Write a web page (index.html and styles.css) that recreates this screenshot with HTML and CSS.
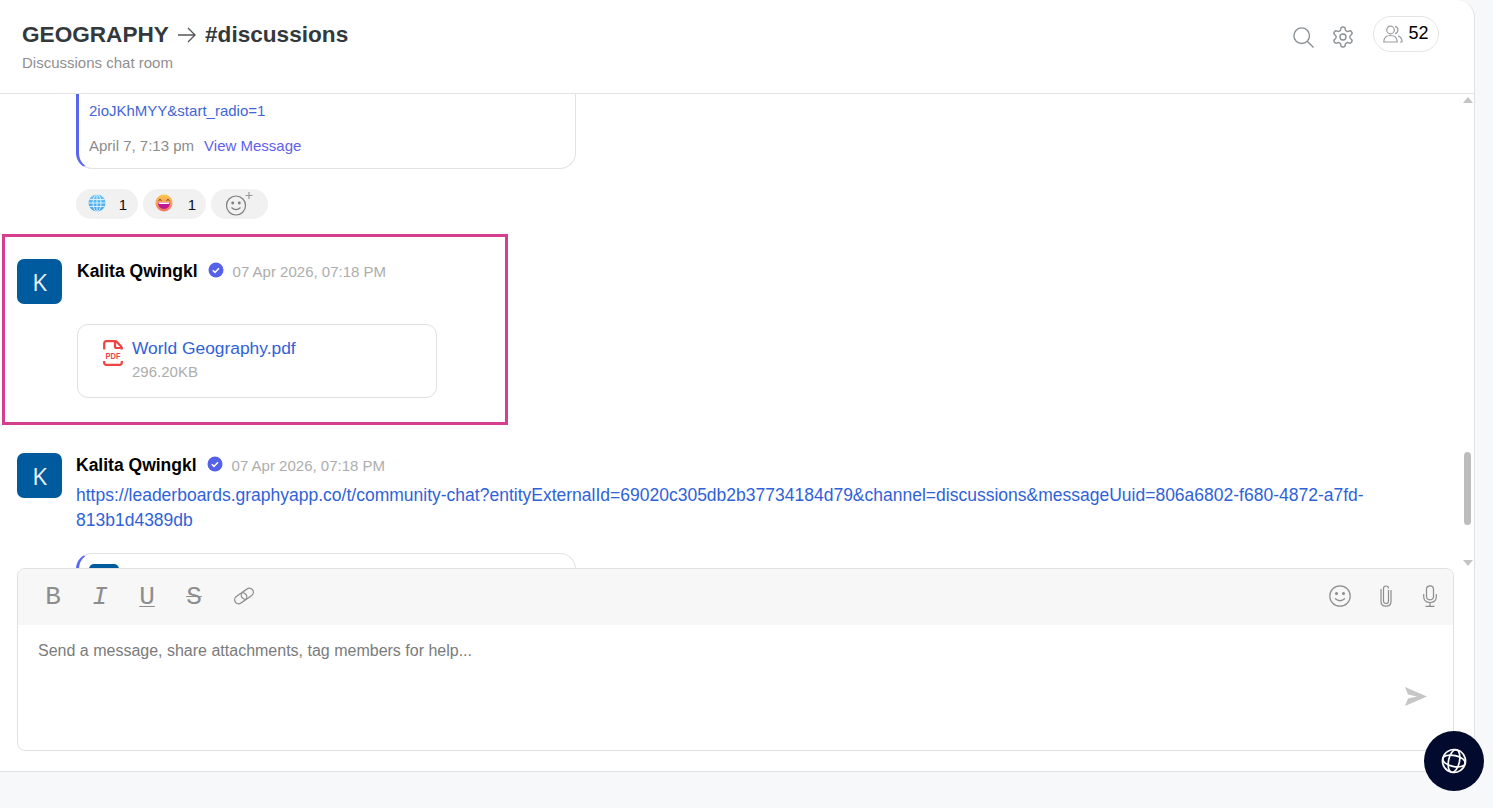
FILE: index.html
```html
<!DOCTYPE html>
<html lang="en">
<head>
<meta charset="utf-8">
<title>GEOGRAPHY → #discussions</title>
<link rel="stylesheet" href="styles.css">
</head>
<body>
<main class="panel">
  <header class="head">
    <div class="head-text">
      <h1 class="title">GEOGRAPHY
        <svg class="title-arrow" width="20" height="18" viewBox="0 0 20 18"><path d="M1 9h17M11 2l7 7-7 7" fill="none" stroke="#555" stroke-width="1.3"/></svg>
        #discussions</h1>
      <p class="subtitle">Discussions chat room</p>
    </div>
    <div class="head-actions">
      <svg class="head-icon head-search" width="21" height="21" viewBox="0 0 21 21"><circle cx="8.700" cy="8.700" r="7.800" fill="none" stroke="#8b9094" stroke-width="1.400"/><path d="M14.500 14.500l6 6" stroke="#8b9094" stroke-width="1.400"/></svg>
      <svg class="head-icon" width="24" height="24" viewBox="0 0 24 24" fill="none" stroke="#8b9094" stroke-width="1.400" stroke-linejoin="round"><circle cx="12" cy="12" r="3"/><path d="M12.220 2h-.44a2 2 0 0 0-2 2v.18a2 2 0 0 1-1 1.730l-.43.25a2 2 0 0 1-2 0l-.15-.08a2 2 0 0 0-2.730.73l-.22.38a2 2 0 0 0 .73 2.730l.15.1a2 2 0 0 1 1 1.720v.51a2 2 0 0 1-1 1.740l-.15.09a2 2 0 0 0-.73 2.730l.22.38a2 2 0 0 0 2.730.73l.15-.08a2 2 0 0 1 2 0l.43.25a2 2 0 0 1 1 1.730V20a2 2 0 0 0 2 2h.44a2 2 0 0 0 2-2v-.18a2 2 0 0 1 1-1.730l.43-.25a2 2 0 0 1 2 0l.15.08a2 2 0 0 0 2.730-.73l.22-.39a2 2 0 0 0-.73-2.730l-.15-.08a2 2 0 0 1-1-1.740v-.5a2 2 0 0 1 1-1.740l.15-.09a2 2 0 0 0 .73-2.730l-.22-.38a2 2 0 0 0-2.730-.73l-.15.08a2 2 0 0 1-2 0l-.43-.25a2 2 0 0 1-1-1.730V4a2 2 0 0 0-2-2z"/></svg>
      <div class="members">
        <svg width="20" height="18" viewBox="0 0 20 18" fill="none" stroke="#9a9ea2" stroke-width="1.200"><circle cx="7.500" cy="5" r="3.800"/><path d="M.8 17c0-4.500 2.500-6.500 6.700-6.500s6.700 2 6.700 6.500z"/><path d="M12 1.300a3.800 3.800 0 0 1 0 7.400M15 10.800c2.500.7 4 2.600 4 6.200h-2"/></svg>
        <span>52</span>
      </div>
    </div>
  </header>

  <section class="feed">
    <div class="quote quote-top">
      <a class="quote-link">2ioJKhMYY&amp;start_radio=1</a>
      <div class="quote-meta"><span>April 7, 7:13 pm</span><a class="view">View Message</a></div>
    </div>

    <div class="reactions">
      <div class="chip chip-a">
        <svg width="18" height="18" viewBox="0 0 18 18"><defs><linearGradient id="g1" x1="0" y1="0" x2="0" y2="1"><stop offset="0" stop-color="#6fc8f7"/><stop offset="1" stop-color="#3f9ff0"/></linearGradient></defs><circle cx="9" cy="9" r="8.500" fill="url(#g1)"/><g fill="none" stroke="#d8f0ff" stroke-width="1"><ellipse cx="9" cy="9" rx="4" ry="8.500"/><path d="M9 .5v17M1.500 5.500h15M.5 9h17M1.500 12.500h15"/></g></svg>
        <span>1</span>
      </div>
      <div class="chip chip-b">
        <svg width="18" height="18" viewBox="0 0 18 18"><defs><linearGradient id="g2" x1="0" y1="0" x2="0" y2="1"><stop offset="0" stop-color="#fdc94a"/><stop offset="1" stop-color="#f4706a"/></linearGradient></defs><circle cx="9" cy="9" r="8.500" fill="url(#g2)"/><path d="M3.500 6.500q1.500-2 3 0M11.500 6.500q1.500-2 3 0" fill="none" stroke="#5a3a30" stroke-width="1"/><path d="M3 8.500h12q0 6.500-6 6.500T3 8.500z" fill="#c2188f"/><path d="M3.500 8.500h11l-.5 1.600H4z" fill="#fff"/></svg>
        <span>1</span>
      </div>
      <div class="chip chip-add">
        <svg width="30" height="26" viewBox="0 0 30 26" fill="none" stroke="#7d7d7d" stroke-width="1.200"><circle cx="11" cy="14.500" r="9.500"/><circle cx="7.700" cy="12" r=".8" fill="#7d7d7d"/><circle cx="14.300" cy="12" r=".8" fill="#7d7d7d"/><path d="M6.500 16.500q4.500 4.500 9 0"/><path d="M24 1v7M20.500 4.500h7" stroke="#999"/></svg>
      </div>
    </div>

    <article class="msg msg-hl">
      <div class="avatar">K</div>
      <div class="msg-body">
        <div class="msg-head">
          <strong class="name">Kalita Qwingkl</strong>
          <svg class="badge" width="16" height="16" viewBox="0 0 16 16"><circle cx="8" cy="8" r="7.500" fill="#5561e8"/><path d="M4.800 8.200l2.200 2.200 4-4.200" fill="none" stroke="#fff" stroke-width="1.500"/></svg>
          <time class="date">07 Apr 2026, 07:18 PM</time>
        </div>
        <div class="file">
          <svg class="pdf" width="20" height="26" viewBox="0 0 20 26"><path d="M1.200 9.500V3.500q0-2.300 2.300-2.300H12q1 0 1.700.7l4.300 4.300q.8.8.8 1.800v1.500M1.200 21v1.500q0 2.300 2.300 2.300h13q2.300 0 2.300-2.300V21M12 1.200V6.500q0 1.500 1.500 1.500h5.300" fill="none" stroke="#ee4444" stroke-width="2.200"/><text class="pdf-text" x="2.500" y="18.500" textLength="15" lengthAdjust="spacingAndGlyphs">PDF</text></svg>
          <div class="file-text">
            <a class="file-name">World Geography.pdf</a>
            <span class="file-size">296.20KB</span>
          </div>
        </div>
      </div>
    </article>

    <article class="msg msg-plain">
      <div class="avatar">K</div>
      <div class="msg-body">
        <div class="msg-head">
          <strong class="name">Kalita Qwingkl</strong>
          <svg class="badge" width="16" height="16" viewBox="0 0 16 16"><circle cx="8" cy="8" r="7.500" fill="#5561e8"/><path d="M4.800 8.200l2.200 2.200 4-4.200" fill="none" stroke="#fff" stroke-width="1.500"/></svg>
          <time class="date">07 Apr 2026, 07:18 PM</time>
        </div>
        <a class="msg-link">https://leaderboards.graphyapp.co/t/community-chat?entityExternalId=69020c305db2b37734184d79&amp;channel=discussions&amp;messageUuid=806a6802-f680-4872-a7fd-813b1d4389db</a>
        <div class="quote quote-next"><div class="mini-avatar"></div></div>
      </div>
    </article>

    <div class="scrollbar">
      <span class="arrow arrow-up"></span>
      <span class="thumb"></span>
      <span class="arrow arrow-down"></span>
    </div>
  </section>

  <section class="composer">
    <div class="toolbar">
      <div class="tools">
        <span class="tool">B</span>
        <span class="tool tool-i">I</span>
        <span class="tool tool-u">U</span>
        <span class="tool tool-s">S</span>
        <svg class="tool-link" width="22" height="18" viewBox="0 0 22 18" fill="none" stroke="#8d8d8d" stroke-width="1.300"><g transform="rotate(-35 11 9)"><rect x="0.500" y="5" width="13" height="8" rx="4"/><rect x="8.500" y="5" width="13" height="8" rx="4"/></g></svg>
      </div>
      <div class="tools-right">
        <svg width="22" height="22" viewBox="0 0 22 22" fill="none" stroke="#8d8d8d" stroke-width="1.200"><circle cx="11" cy="11" r="10.200"/><circle cx="7.500" cy="8.500" r=".9" fill="#8d8d8d"/><circle cx="14.500" cy="8.500" r=".9" fill="#8d8d8d"/><path d="M6 13.500q5 4.500 10 0"/></svg>
        <svg class="clip" width="12" height="22" viewBox="0 0 12 22" fill="none" stroke="#8d8d8d" stroke-width="1.200"><path d="M8.500 5v11q0 2.500-2.500 2.500T3.500 16V3.500Q3.500 1 6 1t2.500 2.500"/><path d="M11 5v11.500q0 4.700-5 4.700T1 16.500V4"/></svg>
        <svg width="14" height="22" viewBox="0 0 14 22" fill="none" stroke="#8d8d8d" stroke-width="1.200"><rect x="3.500" y=".8" width="7" height="14" rx="3.500"/><path d="M.7 9v2.500q0 6 6.300 6t6.300-6V9M7 17.500v3.800M2.500 21.300h9"/></svg>
      </div>
    </div>
    <div class="editor">
      <p class="placeholder">Send a message, share attachments, tag members for help...</p>
      <svg class="send" width="22" height="19" viewBox="0 0 22 19"><path d="M0 0l22 9.500L0 19l3-7.500 9-2-9-2z" fill="#c6c6c6"/></svg>
    </div>
  </section>
</main>
<footer class="foot"></footer>
<button class="fab" aria-label="Community">
  <svg width="28" height="28" viewBox="0 0 28 28" fill="none" stroke="#fff" stroke-width="1.700"><g transform="rotate(12 14 14)"><circle cx="14" cy="14" r="11.500"/><ellipse cx="14" cy="14" rx="5.500" ry="11.500"/><ellipse cx="14" cy="14" rx="11.500" ry="5.500"/></g></svg>
</button>
</body>
</html>
```

FILE: styles.css
```css
* { box-sizing: border-box; }
html, body { height: 100%; }
body {
  margin: 0;
  background: #f7f8fa;
  font-family: "Liberation Sans", Arial, sans-serif;
  color: #333;
  overflow: hidden;
}
.panel {
  width: 1475px;
  height: 772px;
  background: #fff;
  border-right: 1px solid #dfe1e4;
  border-bottom: 1px solid #dfe1e4;
  border-top-right-radius: 18px;
  display: flex;
  flex-direction: column;
}
.head {
  flex: none;
  height: 94px;
  border-bottom: 1px solid #e4e4e4;
  padding: 20px 35px 0 22px;
  display: flex;
  justify-content: space-between;
  align-items: flex-start;
}
.title {
  margin: 1px 0 0;
  font-size: 22.6px;
  line-height: 28px;
  font-weight: 700;
  color: #33383b;
  white-space: nowrap;
}
.title-arrow { vertical-align: -2px; margin: 0 2px; }
.subtitle {
  margin: 4px 0 0;
  font-size: 15px;
  line-height: 20px;
  color: #8f8f8f;
}
.head-actions {
  display: flex;
  align-items: center;
  gap: 18px;
  margin-top: -4px;
}
.head-icon { margin-top: 6px; }
.head-search { margin-right: -1px; }
.members {
  height: 36px;
  width: 66px;
  border: 1px solid #e4e4e4;
  border-radius: 18px;
  display: flex;
  align-items: center;
  justify-content: center;
  gap: 5px;
  font-size: 18px;
  color: #000;
}
.members span { position: relative; top: -1px; }
.feed {
  flex: 1;
  min-height: 0;
  overflow: hidden;
  position: relative;
}
.quote {
  width: 500px;
  background: #fff;
  border: 1px solid #e2e2e2;
  border-left: 3px solid #5a66ee;
  border-radius: 16px;
}
.quote-top {
  margin-left: 76px;
  height: 75px;
  padding: 8px 0 0 10px;
  border-top: 0;
  border-top-left-radius: 0;
  border-top-right-radius: 0;
}
.quote-link {
  display: block;
  font-size: 15px;
  line-height: 18px;
  color: #3f66d8;
}
.quote-meta {
  margin-top: 17px;
  font-size: 15px;
  line-height: 18px;
  color: #8c8c8c;
  display: flex;
  gap: 10px;
}
.view { color: #6160ee; }
.reactions {
  margin: 20px 0 0 76px;
  display: flex;
  gap: 5px;
  height: 31px;
}
.chip {
  height: 30px;
  border-radius: 15px;
  background: #f1f1f1;
  display: flex;
  align-items: center;
  font-size: 15px;
  color: #111;
}
.chip svg { margin-top: -2px; }
.chip-a { width: 62px; padding: 0 11px 0 12px; justify-content: space-between; }
.chip-b { width: 63px; padding: 0 10px 0 12px; justify-content: space-between; }
.chip-add { width: 57px; padding-left: 14px; }
.chip-add svg { margin-top: -1px; }
.msg { display: flex; }
.msg-hl {
  margin: 14px 0 0 2px;
  width: 506px;
  height: 191px;
  border: 3px solid #d63f90;
  padding: 22px 0 0 12px;
  gap: 15px;
}
.msg-plain {
  margin: 28px 0 0 17px;
  gap: 14px;
  width: 1360px;
}
.avatar {
  flex: none;
  width: 45px;
  height: 45px;
  border-radius: 7px;
  background: #005a9e;
  color: #e8f0f8;
  font-family: "Open Sans", "Liberation Sans", sans-serif;
  font-size: 24px;
  display: flex;
  align-items: center;
  justify-content: center;
}
.msg-body { flex: 1; min-width: 0; }
.msg-head {
  display: flex;
  align-items: center;
  height: 24px;
}
.name {
  font-size: 17.5px;
  font-weight: 700;
  color: #000;
  white-space: nowrap;
}
.badge { margin: -3px 0 0 10px; }
.date {
  margin-left: 9px;
  font-size: 15px;
  color: #adadad;
  white-space: nowrap;
}
.file {
  width: 360px;
  height: 74px;
  margin-top: 41px;
  border: 1px solid #e0e0e0;
  border-radius: 11px;
  padding: 14px 0 0 25px;
  display: flex;
  gap: 9px;
}
.pdf { margin-top: 1px; overflow: visible; }
.pdf-text {
  font-family: "Liberation Sans", sans-serif;
  font-size: 9.500px;
  font-weight: 700;
  fill: #ee4444;
}
.file-text { display: flex; flex-direction: column; }
.file-name {
  font-size: 17.4px;
  line-height: 18px;
  color: #2f62d9;
}
.file-size {
  margin-top: 6px;
  font-size: 15px;
  line-height: 18px;
  color: #adadad;
}
.msg-link {
  display: block;
  margin-top: 6px;
  font-size: 17.5px;
  line-height: 25px;
  color: #2f62d9;
  overflow-wrap: anywhere;
}
.quote-next {
  height: 60px;
  margin-top: 20px;
  padding: 10px 0 0 10px;
  border-radius: 16px;
}
.mini-avatar {
  width: 30px;
  height: 30px;
  border-radius: 5px;
  background: #005a9e;
}
.scrollbar {
  position: absolute;
  right: 0;
  top: 0;
  bottom: 0;
  width: 12px;
  display: block;
}
.thumb {
  position: absolute;
  left: 2px;
  top: 358px;
  width: 7px;
  height: 73px;
  border-radius: 4px;
  background: #bdbdbd;
}
.arrow {
  position: absolute;
  left: 1px;
  width: 0;
  height: 0;
  border-left: 5px solid transparent;
  border-right: 5px solid transparent;
}
.arrow-up { top: 3px; border-bottom: 6px solid #c4c4c4; }
.arrow-down { bottom: 2px; border-top: 6px solid #c4c4c4; }
.composer {
  flex: none;
  height: 183px;
  margin: 0 20px 20px 17px;
  border: 1px solid #e0e0e0;
  border-radius: 8px;
  background: #fff;
  display: flex;
  flex-direction: column;
}
.toolbar {
  height: 56px;
  background: #f7f7f7;
  border-radius: 8px 8px 0 0;
  display: flex;
  justify-content: space-between;
  align-items: center;
  padding: 0 16px 0 27px;
}
.tools { display: flex; align-items: center; gap: 31px; }
.tool {
  width: 16px;
  font-family: "Liberation Mono", monospace;
  font-size: 26px;
  line-height: 28px;
  color: #8d8d8d;
  text-align: center;
}
.tool-i { font-style: italic; }
.tool-u { text-decoration: underline; text-underline-offset: 2px; text-decoration-thickness: 1px; }
.tool-s { text-decoration: line-through; text-decoration-thickness: 1px; }
.tool-link { margin-top: -3px; }
.tools-right { display: flex; align-items: center; gap: 29px; }
.tools-right svg { margin-top: -2px; }
.tools-right .clip { margin-right: 2px; }
.editor {
  flex: 1;
  padding: 16px 26px 0 20px;
  display: flex;
  flex-direction: column;
}
.placeholder {
  margin: 0;
  font-size: 16px;
  line-height: 20px;
  color: #7b7b7b;
}
.send { align-self: flex-end; margin-top: 26px; }
.foot { height: 36px; }
.fab {
  position: fixed;
  left: 1424px;
  top: 731px;
  width: 60px;
  height: 60px;
  border: 0;
  padding: 0;
  border-radius: 50%;
  background: #020a2e;
  display: flex;
  align-items: center;
  justify-content: center;
}
```
